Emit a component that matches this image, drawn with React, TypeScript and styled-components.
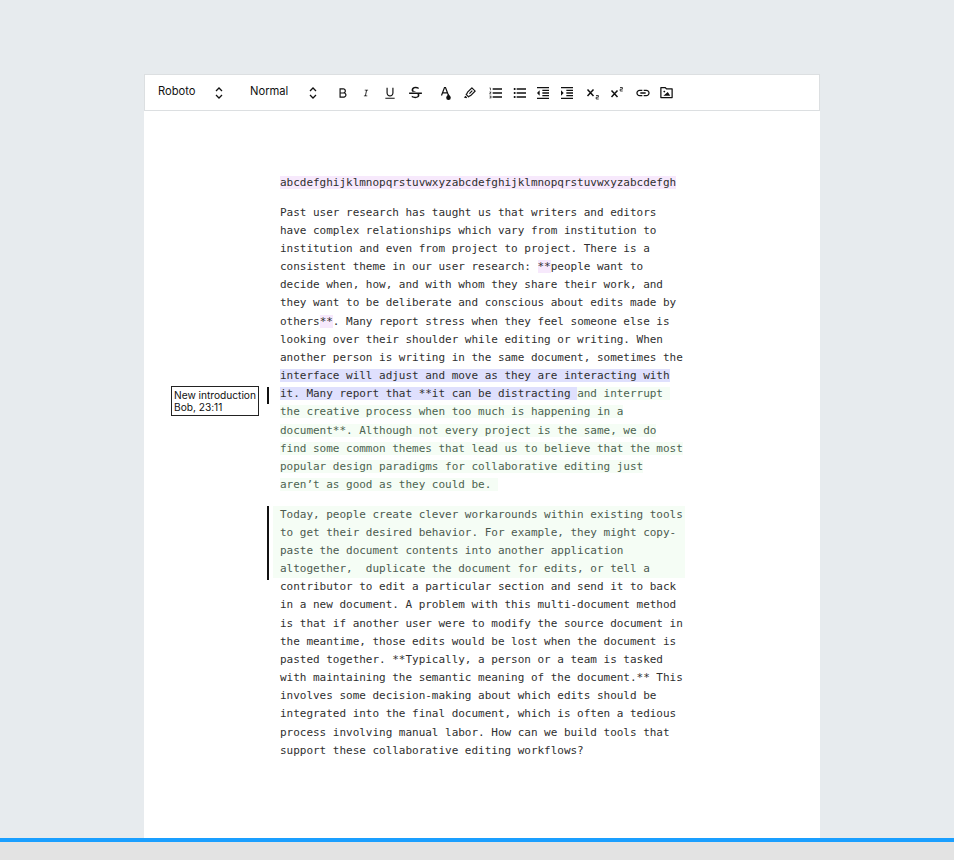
import * as React from 'react'
import styled, { createGlobalStyle } from 'styled-components'
import { RiBold, RiItalic, RiUnderline, RiStrikethrough, RiMarkPenLine, RiFolderImageLine } from 'react-icons/ri'
import {
    MdFormatListNumbered,
    MdFormatListBulleted,
    MdFormatIndentDecrease,
    MdFormatIndentIncrease,
    MdLink,
} from 'react-icons/md'

const GlobalStyle = createGlobalStyle`
    html, body {
        margin: 0;
        padding: 0;
        background: #e7ebee;
    }
`

const Page = styled.div`
    height: 860px;
    display: flex;
    flex-direction: column;
    overflow: hidden;
    font-family: "DejaVu Sans Mono", monospace;
`

const Workspace = styled.div`
    flex: 0 0 838px;
    height: 838px;
    padding: 74px 134px 0 144px;
    box-sizing: border-box;
    overflow: hidden;
`

const Sheet = styled.div`
    height: 100%;
    background: #fff;
`

const Toolbar = styled.div`
    height: 37px;
    box-sizing: border-box;
    display: flex;
    align-items: center;
    padding-left: 13px;
    border: 1px solid #dcdfe1;
    background: #fff;
    color: #111;
`

const Select = styled.div<{ $width: number }>`
    width: ${p => p.$width}px;
    display: flex;
    align-items: center;
    font-family: "Inter", sans-serif;
    font-size: 11.2px;
`

const SelectLabel = styled.span<{ $gap: number }>`
    width: 37px;
    margin-right: ${p => p.$gap}px;
    margin-top: -4px;
    white-space: nowrap;
`

const Group = styled.div<{ $gap?: number }>`
    display: flex;
    align-items: center;
    margin-right: ${p => p.$gap || 0}px;
`

const ToolButton = styled.span<{ $wide?: boolean }>`
    width: ${p => (p.$wide ? 27 : 23.5)}px;
    height: 24px;
    display: flex;
    align-items: center;
    justify-content: center;
    color: #111;
`

const Column = styled.div`
    width: 405px;
    margin-left: 136px;
    padding-top: 63px;
    font-size: 11px;
    letter-spacing: -0.02px;
    line-height: 18.15px;
    color: #2f2f2f;
`

const Paragraph = styled.p`
    position: relative;
    margin: 0 0 11.5px;
`

const Mark = styled.span<{ $tone: 'purple' | 'blue' | 'green' }>`
    background: ${p => ({ purple: '#f7e9fc', blue: '#dfe0fd', green: '#f5fdf5' }[p.$tone])};
    color: ${p => (p.$tone === 'green' ? '#4c6350' : 'inherit')};
`

const InsertedBlock = styled.div`
    margin-left: -7px;
    padding-left: 7px;
    background: #f5fdf5;
    color: #4c5a50;
`

const ChangeBar = styled.span<{ $top: number; $height: number }>`
    position: absolute;
    left: -13px;
    top: ${p => p.$top}px;
    width: 2px;
    height: ${p => p.$height}px;
    background: #111;
`

const Comment = styled.div`
    position: absolute;
    left: -109px;
    top: 182.5px;
    width: 88px;
    height: 30px;
    box-sizing: border-box;
    padding: 2px 2px;
    border: 1px solid #222;
    background: #fff;
    font-family: "Inter", sans-serif;
    font-size: 10.2px;
    line-height: 12px;
    color: #111;
    white-space: nowrap;
`

const ProgressBar = styled.div`
    flex: 0 0 4px;
    background: #1a9fff;
`

const Footer = styled.div`
    flex: 1;
    background: #e3e3e3;
`

const Chevrons = () => (
    <svg width="14" height="14" viewBox="0 0 14 14" fill="none" stroke="#111" strokeWidth="1.3">
        <path d="M4 5l3-3 3 3M4 9l3 3 3-3" />
    </svg>
)

const FontColorIcon = () => (
    <svg width="14" height="16" viewBox="0 0 14 16" fill="none">
        <path d="M2.5 10.5L5.5 2.5h1l3 8M3.6 7.8h4.6" stroke="#111" strokeWidth="1.2" />
        <path d="M9.5 9c1.4 1.7 2.3 2.6 2.3 3.7a2.3 2.3 0 0 1-4.6 0c0-1.1.9-2 2.3-3.7z" fill="#111" />
    </svg>
)

const SubscriptIcon = () => (
    <svg width="14" height="14" viewBox="0 0 14 14" fill="none" stroke="#111">
        <path d="M1.5 3.5l6 6.5M7.5 3.5l-6 6.5" strokeWidth="1.5" />
        <path d="M10 9.5h2.4v1.7h-2.2v1.8h2.5" strokeWidth="0.8" />
    </svg>
)

const SuperscriptIcon = () => (
    <svg width="14" height="14" viewBox="0 0 14 14" fill="none" stroke="#111">
        <path d="M1.5 4.5l6 6.5M7.5 4.5l-6 6.5" strokeWidth="1.5" />
        <path d="M10 1.5h2.4v1.7h-2.2V5h2.5" strokeWidth="0.8" />
    </svg>
)

export default function App() {
    return (
        <Page>
            <GlobalStyle />
            <Workspace>
                <Sheet>
                    <Toolbar>
                        <Select $width={92}>
                            <SelectLabel $gap={17}>Roboto</SelectLabel>
                            <Chevrons />
                        </Select>
                        <Select $width={81}>
                            <SelectLabel $gap={19}>Normal</SelectLabel>
                            <Chevrons />
                        </Select>
                        <Group $gap={5.75}>
                            <ToolButton><RiBold size={14} /></ToolButton>
                            <ToolButton><RiItalic size={10} /></ToolButton>
                            <ToolButton><RiUnderline size={14} /></ToolButton>
                            <ToolButton $wide><RiStrikethrough size={17} /></ToolButton>
                        </Group>
                        <Group $gap={3}>
                            <ToolButton><FontColorIcon /></ToolButton>
                            <ToolButton><RiMarkPenLine size={14} /></ToolButton>
                        </Group>
                        <Group $gap={3}>
                            <ToolButton><MdFormatListNumbered size={16} /></ToolButton>
                            <ToolButton><MdFormatListBulleted size={16} /></ToolButton>
                            <ToolButton><MdFormatIndentDecrease size={16} /></ToolButton>
                            <ToolButton><MdFormatIndentIncrease size={16} /></ToolButton>
                        </Group>
                        <Group $gap={3}>
                            <ToolButton><SubscriptIcon /></ToolButton>
                            <ToolButton><SuperscriptIcon /></ToolButton>
                        </Group>
                        <Group>
                            <ToolButton><MdLink size={16} /></ToolButton>
                            <ToolButton><RiFolderImageLine size={15} /></ToolButton>
                        </Group>
                    </Toolbar>
                    <Column>
                        <Paragraph>
                            <Mark $tone="purple">abcdefghijklmnopqrstuvwxyzabcdefghijklmnopqrstuvwxyzabcdefgh</Mark>
                        </Paragraph>
                        <Paragraph>
                            <Comment>New introduction<br />Bob, 23:11</Comment>
                            <ChangeBar $top={183} $height={17} />
                            Past user research has taught us that writers and editors have complex relationships which vary from institution to institution and even from project to project. There is a consistent theme in our user research: <Mark $tone="purple">**</Mark>people want to decide when, how, and with whom they share their work, and they want to be deliberate and conscious about edits made by others<Mark $tone="purple">**</Mark>. Many report stress when they feel someone else is looking over their shoulder while editing or writing. When another person is writing in the same document, sometimes the <Mark $tone="blue">interface will adjust and move as they are interacting with it. Many report that **it can be distracting&nbsp;</Mark><Mark $tone="green">and interrupt&nbsp; the creative process when too much is happening in a document**. Although not every project is the same, we do find some common themes that lead us to believe that the most popular design paradigms for collaborative editing just aren’t as good as they could be.&nbsp;</Mark>
                        </Paragraph>
                        <Paragraph>
                            <ChangeBar $top={0} $height={74} />
                            <InsertedBlock>
                                Today, people create clever workarounds within existing tools to get their desired behavior. For example, they might copy-paste the document contents into another application altogether,&nbsp; duplicate the document for edits, or tell a
                            </InsertedBlock>
                            contributor to edit a particular section and send it to back in a new document. A problem with this multi-document method is that if another user were to modify the source document in the meantime, those edits would be lost when the document is pasted together. **Typically, a person or a team is tasked with maintaining the semantic meaning of the document.** This involves some decision-making about which edits should be integrated into the final document, which is often a tedious process involving manual labor. How can we build tools that support these collaborative editing workflows?
                        </Paragraph>
                    </Column>
                </Sheet>
            </Workspace>
            <ProgressBar />
            <Footer />
        </Page>
    )
}
